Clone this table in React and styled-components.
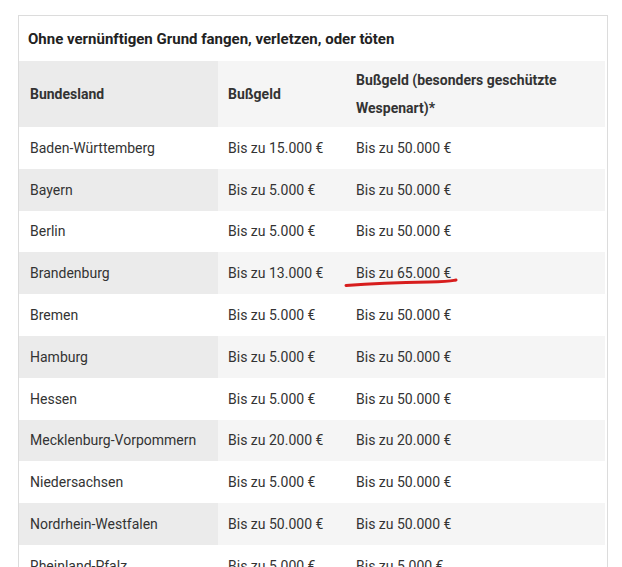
import React from 'react';
import styled, { createGlobalStyle } from 'styled-components';

const GlobalStyle = createGlobalStyle`
  body {
    margin: 0;
    background: #fff;
    font-family: Roboto, "Liberation Sans", sans-serif;
    color: #333;
  }
`;

const Page = styled.div`
  padding: 15px 15px 0 18px;
  width: 590px;
`;

const Box = styled.div`
  border: 1px solid #dcdcdc;
  padding: 0 2px 0 0;
  width: 586px;
`;

const Title = styled.div`
  height: 45px;
  display: flex;
  align-items: center;
  padding-left: 9px;
  font-size: 15px;
  font-weight: 700;
  color: #222;
`;

const Table = styled.div`
  display: grid;
  grid-template-columns: 199px 128px 1fr;
`;

const Cell = styled.div`
  position: relative;
  display: flex;
  align-items: center;
  height: ${(p) => (p.$head ? '66px' : '41.8px')};
  padding: 0 10px 0 ${(p) => (p.$first ? '11px' : '10px')};
  font-size: 14px;
  font-weight: ${(p) => (p.$head ? 700 : 400)};
  line-height: 28px;
  background: ${(p) =>
    p.$shade ? (p.$first ? '#ebebeb' : '#f5f5f5') : '#fff'};
`;

const Mark = styled.svg`
  position: absolute;
  left: -2px;
  top: 25px;
  overflow: visible;
`;

const rows = [
  ['Baden-Württemberg', 'Bis zu 15.000 €', 'Bis zu 50.000 €'],
  ['Bayern', 'Bis zu 5.000 €', 'Bis zu 50.000 €'],
  ['Berlin', 'Bis zu 5.000 €', 'Bis zu 50.000 €'],
  ['Brandenburg', 'Bis zu 13.000 €', 'Bis zu 65.000 €', true],
  ['Bremen', 'Bis zu 5.000 €', 'Bis zu 50.000 €'],
  ['Hamburg', 'Bis zu 5.000 €', 'Bis zu 50.000 €'],
  ['Hessen', 'Bis zu 5.000 €', 'Bis zu 50.000 €'],
  ['Mecklenburg-Vorpommern', 'Bis zu 20.000 €', 'Bis zu 20.000 €'],
  ['Niedersachsen', 'Bis zu 5.000 €', 'Bis zu 50.000 €'],
  ['Nordrhein-Westfalen', 'Bis zu 50.000 €', 'Bis zu 50.000 €'],
  ['Rheinland-Pfalz', 'Bis zu 5.000 €', 'Bis zu 5.000 €'],
];

export default function App() {
  return (
    <>
      <GlobalStyle />
      <Page>
        <Box>
          <Title>Ohne vernünftigen Grund fangen, verletzen, oder töten</Title>
          <Table>
            <Cell $head $shade $first>Bundesland</Cell>
            <Cell $head $shade>Bußgeld</Cell>
            <Cell $head $shade>Bußgeld (besonders geschützte Wespenart)*</Cell>
            {rows.map(([land, fine, special, marked], i) => {
              const shade = i % 2 === 1;
              return (
                <React.Fragment key={land}>
                  <Cell $shade={shade} $first>{land}</Cell>
                  <Cell $shade={shade}>{fine}</Cell>
                  <Cell $shade={shade}>
                    {special}
                    {marked && (
                      <Mark width="114" height="10">
                        <path
                          d="M2 8.5 C30 6.5, 60 5.5, 85 5 S108 3.5, 112 3"
                          fill="none"
                          stroke="#d71d1d"
                          strokeWidth="3"
                          strokeLinecap="round"
                        />
                      </Mark>
                    )}
                  </Cell>
                </React.Fragment>
              );
            })}
          </Table>
        </Box>
      </Page>
    </>
  );
}
